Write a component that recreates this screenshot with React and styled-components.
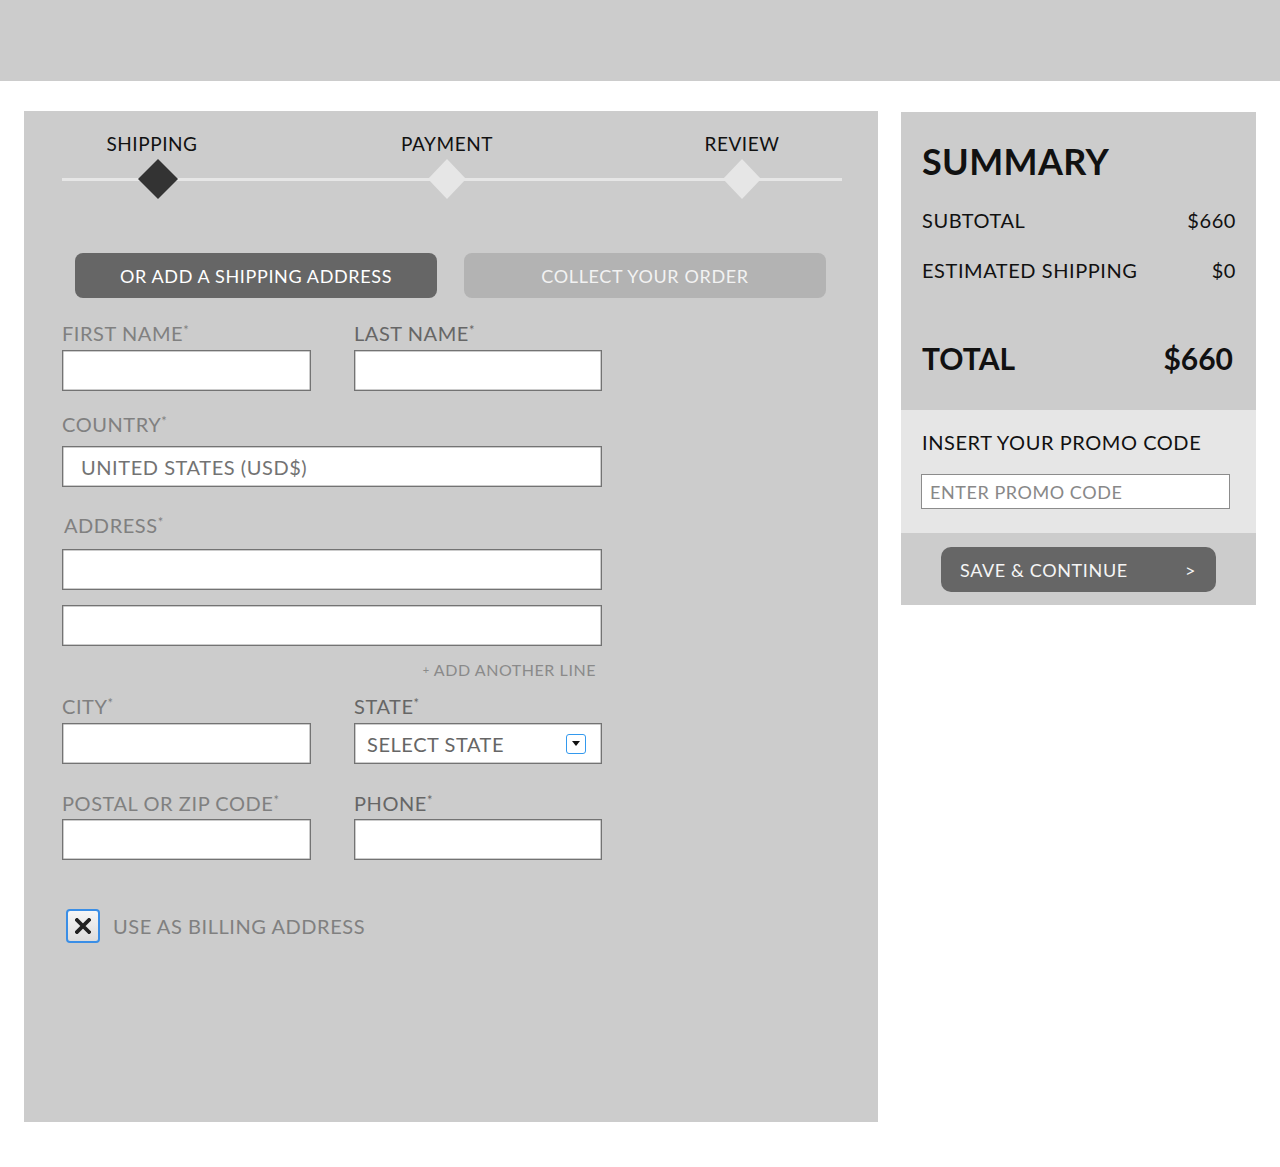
import React from 'react'
import styled, { createGlobalStyle } from 'styled-components'

const FONT = `'Lato', 'Open Sans', sans-serif`

const GlobalStyle = createGlobalStyle`
  body {
    margin: 0;
    background: #ffffff;
    font-family: ${FONT};
    letter-spacing: 0.035em;
  }
  * { box-sizing: border-box; }
`

const steps = [
  { label: 'SHIPPING', active: true },
  { label: 'PAYMENT' },
  { label: 'REVIEW' },
]

const Page = styled.div`
  width: 1280px;
  min-height: 1167px;
`

const TopBar = styled.header`
  height: 81px;
  background: #cccccc;
`

const Main = styled.main`
  display: flex;
  align-items: flex-start;
  gap: 23px;
  padding: 30px 0 45px 24px;
`

const CheckoutPanel = styled.section`
  width: 854px;
  height: 1011px;
  background: #cccccc;
  padding: 21px 36px 0 38px;
`

const Steps = styled.div`
  display: flex;
  gap: 115px;
  width: 780px;
  background: linear-gradient(#e6e6e6, #e6e6e6) no-repeat;
  background-size: 100% 3px;
  background-position: 0 46px;
`

const Step = styled.div`
  width: 180px;
  display: flex;
  flex-direction: column;
  align-items: center;
`

const StepLabel = styled.div`
  font-size: 19px;
  line-height: 24px;
  color: #111;
  height: 27px;
`

const Diamond = styled.div`
  width: ${p => (p.$active ? 40 : 38)}px;
  height: 40px;
  margin-left: ${p => (p.$active ? 12 : 0)}px;
  background: ${p => (p.$active ? '#333333' : '#e6e6e6')};
  clip-path: polygon(50% 0, 100% 50%, 50% 100%, 0 50%);
`

const ModeRow = styled.div`
  display: flex;
  gap: 27px;
  margin: 54px 0 0 13px;
`

const ModeButton = styled.button`
  width: 362px;
  height: 45px;
  border: none;
  border-radius: 8px;
  background: ${p => (p.$primary ? '#666666' : '#b3b3b3')};
  color: ${p => (p.$primary ? '#ffffff' : '#f2f2f2')};
  font-family: ${FONT};
  font-size: 18px;
  letter-spacing: 0.035em;
  padding: 0;
`

const Form = styled.div`
  width: 540px;
  display: flex;
  flex-direction: column;
`

const Row = styled.div`
  display: grid;
  grid-template-columns: 249px 248px;
  column-gap: 43px;
  margin-top: ${p => p.$top}px;
`

const Field = styled.div`
  display: flex;
  flex-direction: column;
  margin-top: ${p => p.$top || 0}px;
`

const Label = styled.label`
  font-size: 20px;
  line-height: 24px;
  color: ${p => (p.$dark ? '#666666' : '#808080')};
  margin-bottom: ${p => p.$gap}px;
  padding-left: ${p => p.$indent || 0}px;

  sup {
    font-size: 13px;
    vertical-align: 6px;
    line-height: 0;
  }
`

const Input = styled.div`
  height: 41px;
  background: #ffffff;
  border: 1px solid #737373;
  box-shadow: inset 0 0 0 0.5px #9a9a9a;
  display: flex;
  align-items: center;
  justify-content: space-between;
  padding: 0 15px 0 ${p => p.$indent || 18}px;
  font-size: 20px;
  color: ${p => (p.$dark ? '#666666' : '#737373')};
  margin-top: ${p => p.$top || 0}px;
`

const DropIcon = styled.span`
  width: 20px;
  height: 20px;
  border: 1.5px solid #3399ee;
  border-radius: 3px;
  display: flex;
  align-items: center;
  justify-content: center;
`

const AddLine = styled.div`
  align-self: flex-end;
  margin: 14px 6px 0 0;
  font-size: 16px;
  line-height: 20px;
  color: #8a8a8a;

  span {
    font-size: 11px;
    vertical-align: 2px;
  }
`

const CheckRow = styled.div`
  display: flex;
  align-items: center;
  gap: 13px;
  margin: 49px 0 0 4px;
  font-size: 20px;
  color: #808080;
`

const CheckBox = styled.span`
  width: 34px;
  height: 34px;
  border: 2px solid #3a8ee6;
  border-radius: 4px;
  background: linear-gradient(#f6f6f6, #dcdcdc);
  display: flex;
  align-items: center;
  justify-content: center;
`

const Summary = styled.aside`
  width: 355px;
  margin-top: 1px;
`

const SummaryTop = styled.div`
  background: #cccccc;
  padding: 27px 20px 34px 21px;
`

const Title = styled.h1`
  margin: 0 0 25px;
  font-size: 36px;
  line-height: 44px;
  font-weight: 700;
  letter-spacing: 0.01em;
  color: #111;
`

const Line = styled.div`
  display: flex;
  justify-content: space-between;
  font-size: 20px;
  line-height: 24px;
  color: #111;
  margin-bottom: 26px;
`

const TotalLine = styled.div`
  display: flex;
  justify-content: space-between;
  font-size: 30px;
  line-height: 36px;
  font-weight: 700;
  letter-spacing: 0;
  color: #111;
  margin-top: 58px;
  padding-right: 3px;
`

const Promo = styled.div`
  background: #e6e6e6;
  padding: 20px 26px 24px 20px;
`

const PromoTitle = styled.div`
  font-size: 20px;
  line-height: 24px;
  color: #111;
  padding-left: 1px;
`

const PromoInput = styled.div`
  margin-top: 20px;
  height: 35px;
  background: #ffffff;
  border: 1px solid #8c8c8c;
  padding: 0 8px;
  display: flex;
  align-items: center;
  font-size: 18px;
  color: #888888;
`

const Actions = styled.div`
  background: #cccccc;
  padding: 14px 40px 13px;
`

const SaveButton = styled.button`
  width: 100%;
  height: 45px;
  border: none;
  border-radius: 10px;
  background: #666666;
  color: #f5f5f5;
  font-family: ${FONT};
  font-size: 18px;
  letter-spacing: 0.035em;
  display: flex;
  align-items: center;
  justify-content: space-between;
  padding: 0 20px 0 19px;
`

const Req = () => <sup>*</sup>

const App = () => {
  return (
    <Page>
      <GlobalStyle />
      <TopBar />
      <Main>
        <CheckoutPanel>
          <Steps>
            {steps.map(step => (
              <Step key={step.label}>
                <StepLabel>{step.label}</StepLabel>
                <Diamond $active={step.active} />
              </Step>
            ))}
          </Steps>

          <ModeRow>
            <ModeButton $primary>OR ADD A SHIPPING ADDRESS</ModeButton>
            <ModeButton>COLLECT YOUR ORDER</ModeButton>
          </ModeRow>

          <Form>
            <Row $top={23}>
              <Field>
                <Label $gap={5}>FIRST NAME<Req /></Label>
                <Input />
              </Field>
              <Field>
                <Label $gap={5} $dark>LAST NAME<Req /></Label>
                <Input />
              </Field>
            </Row>

            <Field $top={21}>
              <Label $gap={10}>COUNTRY<Req /></Label>
              <Input>UNITED STATES (USD$)</Input>
            </Field>

            <Field $top={26}>
              <Label $gap={12} $indent={2}>ADDRESS<Req /></Label>
              <Input />
              <Input $top={15} />
            </Field>

            <AddLine><span>+</span> ADD ANOTHER LINE</AddLine>

            <Row $top={14}>
              <Field>
                <Label $gap={5}>CITY<Req /></Label>
                <Input />
              </Field>
              <Field>
                <Label $gap={5} $dark>STATE<Req /></Label>
                <Input $dark $indent={12}>
                  SELECT STATE
                  <DropIcon>
                    <svg width="8" height="5" viewBox="0 0 8 5">
                      <polygon points="0,0 8,0 4,5" fill="#111" />
                    </svg>
                  </DropIcon>
                </Input>
              </Field>
            </Row>

            <Row $top={27}>
              <Field>
                <Label $gap={4}>POSTAL OR ZIP CODE<Req /></Label>
                <Input />
              </Field>
              <Field>
                <Label $gap={4} $dark>PHONE<Req /></Label>
                <Input />
              </Field>
            </Row>

            <CheckRow>
              <CheckBox>
                <svg width="16" height="16" viewBox="0 0 16 16">
                  <path d="M2 2 L14 14 M14 2 L2 14" stroke="#222" strokeWidth="3.8" strokeLinecap="square" />
                </svg>
              </CheckBox>
              USE AS BILLING ADDRESS
            </CheckRow>
          </Form>
        </CheckoutPanel>

        <Summary>
          <SummaryTop>
            <Title>SUMMARY</Title>
            <Line><span>SUBTOTAL</span><span>$660</span></Line>
            <Line><span>ESTIMATED SHIPPING</span><span>$0</span></Line>
            <TotalLine><span>TOTAL</span><span>$660</span></TotalLine>
          </SummaryTop>
          <Promo>
            <PromoTitle>INSERT YOUR PROMO CODE</PromoTitle>
            <PromoInput>ENTER PROMO CODE</PromoInput>
          </Promo>
          <Actions>
            <SaveButton>
              <span>SAVE &amp; CONTINUE</span>
              <span>&gt;</span>
            </SaveButton>
          </Actions>
        </Summary>
      </Main>
    </Page>
  )
}

export default App
